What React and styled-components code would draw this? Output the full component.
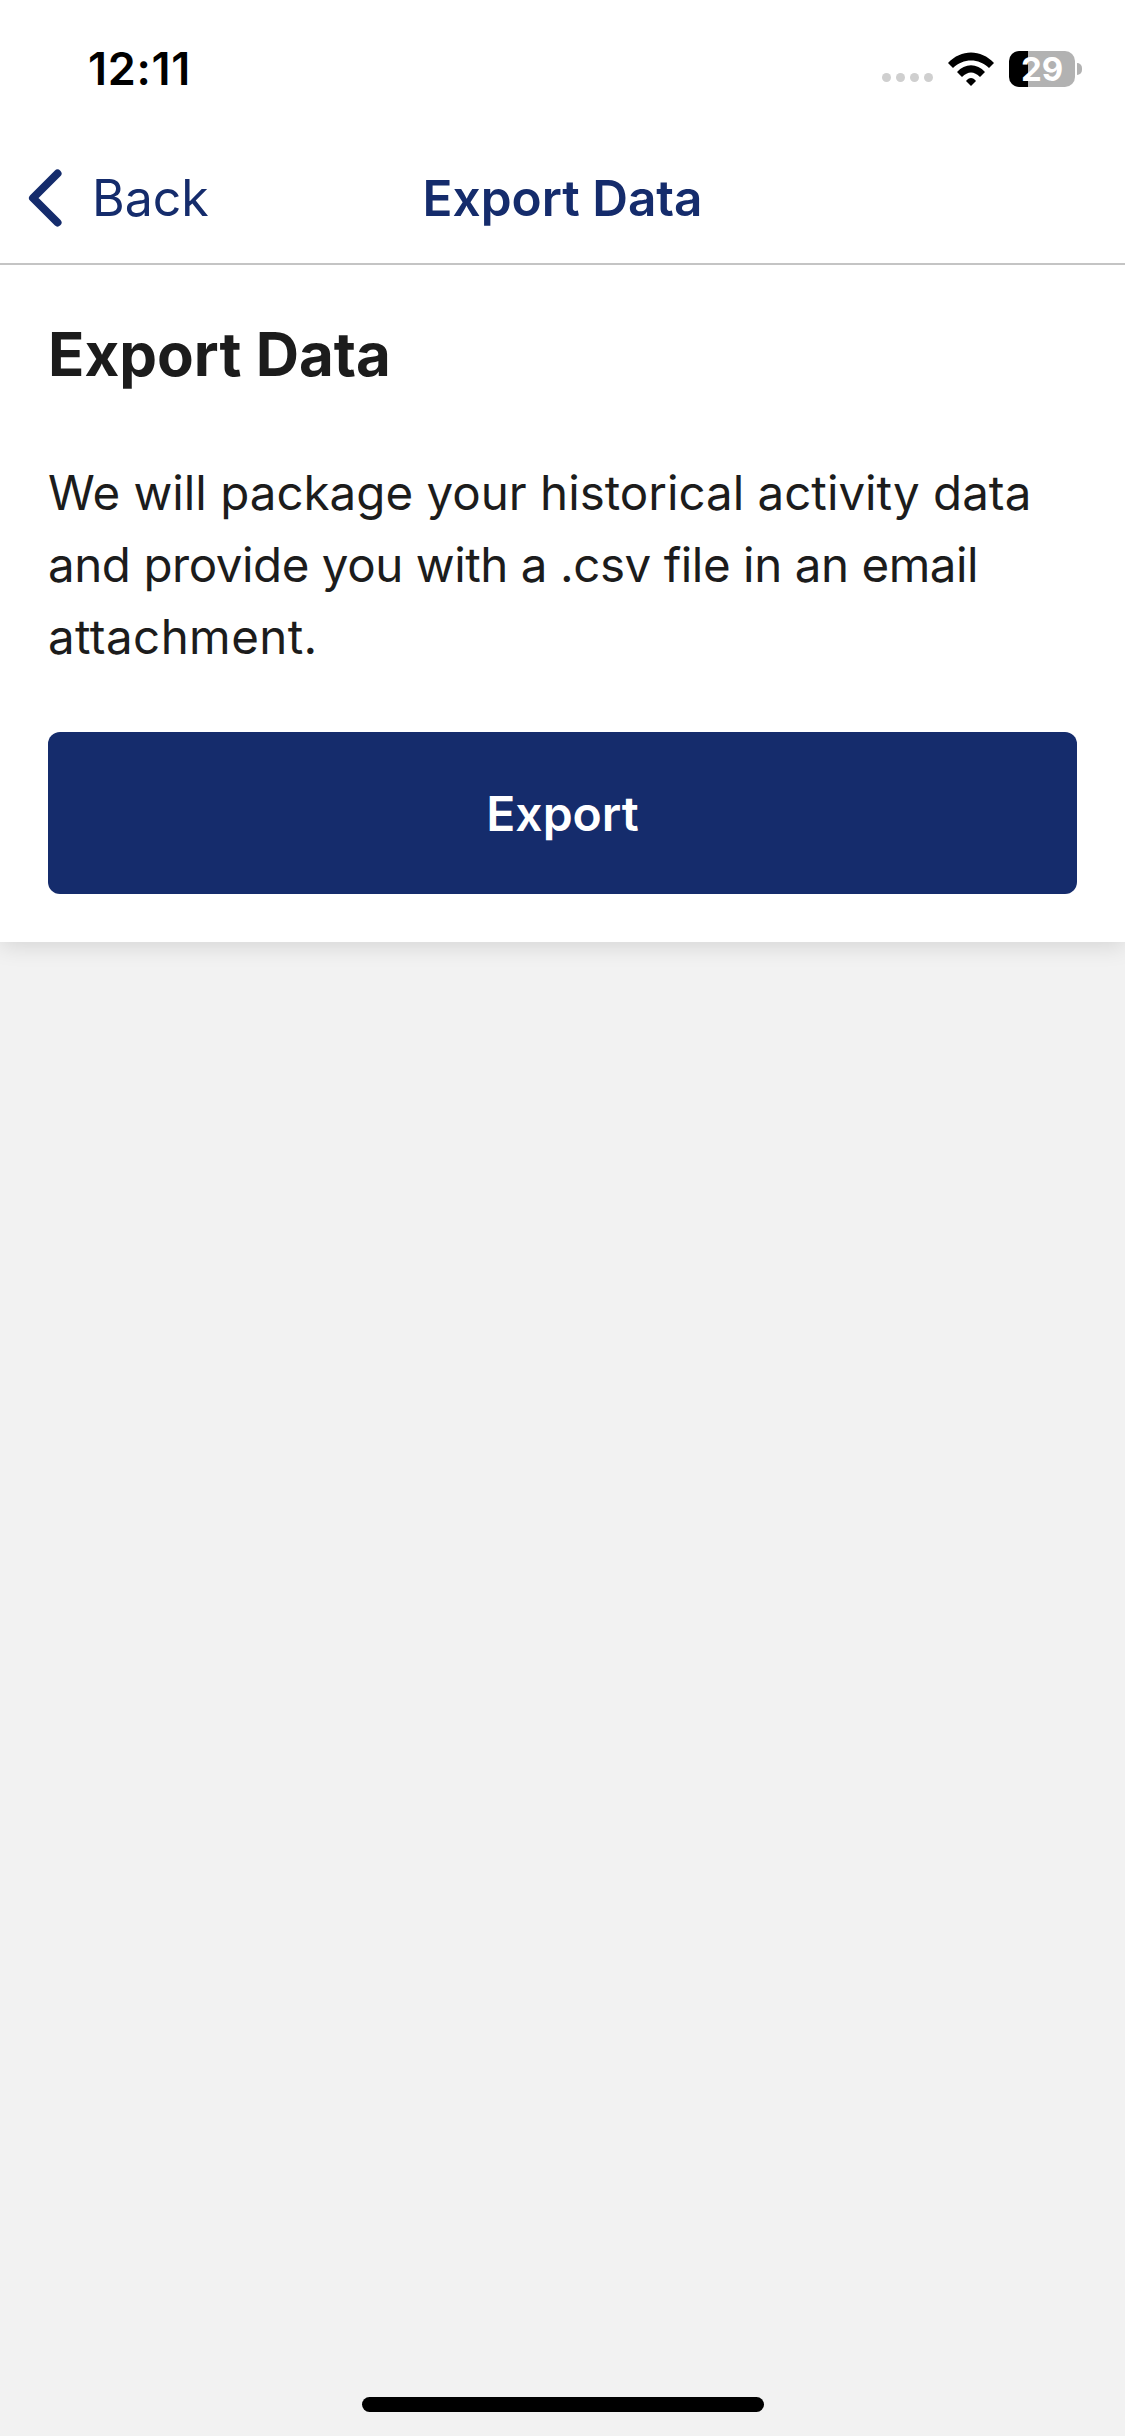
import React from 'react';
import styled, { createGlobalStyle } from 'styled-components';

const GlobalStyle = createGlobalStyle`
  html, body {
    margin: 0;
    padding: 0;
    background: #f2f2f2;
  }
  * {
    box-sizing: border-box;
  }
`;

const Page = styled.div`
  position: relative;
  width: 1125px;
  height: 2436px;
  background: #f2f2f2;
  font-family: Inter, "Liberation Sans", sans-serif;
  overflow: hidden;
`;

const StatusBar = styled.div`
  height: 132px;
  background: #fff;
  display: flex;
  justify-content: space-between;
  align-items: flex-start;
  padding: 42px 0 0 88px;
`;

const Time = styled.div`
  font-size: 45px;
  line-height: 54px;
  font-weight: 600;
  color: #000;
  letter-spacing: 0.7px;
`;

const StatusIcons = styled.div`
  display: flex;
  align-items: center;
  margin: 9px 50px 0 0;
`;

const SignalDots = styled.div`
  display: flex;
  gap: 5px;
  margin: 16px 15px 0 0;
`;

const Dot = styled.span`
  width: 9px;
  height: 9px;
  border-radius: 50%;
  background: #cfcfcf;
`;

const Battery = styled.div`
  position: relative;
  width: 66px;
  height: 36px;
  margin-left: 15px;
  border-radius: 10px;
  background: linear-gradient(to right, #000 0 29%, #b2b2b2 29% 100%);
  color: #fff;
  font-size: 33px;
  line-height: 36px;
  font-weight: 700;
  text-align: center;

  &::after {
    content: '';
    position: absolute;
    top: 12px;
    right: -7px;
    width: 5px;
    height: 12px;
    border-radius: 0 6px 6px 0;
    background: #b2b2b2;
  }
`;

const NavBar = styled.header`
  position: relative;
  height: 133px;
  background: #fff;
  border-bottom: 2px solid #c4c4c4;
  display: flex;
  align-items: center;
  justify-content: center;
`;

const BackLink = styled.div`
  position: absolute;
  left: 28px;
  top: 36px;
  display: flex;
  align-items: center;
  gap: 30px;
  color: #152c6c;
  font-size: 50px;
  line-height: 60px;
`;

const NavTitle = styled.div`
  color: #152c6c;
  font-size: 49.5px;
  line-height: 60px;
  font-weight: 600;
`;

const Card = styled.section`
  background: #fff;
  padding: 53px 48px 48px;
  box-shadow: 0 4px 22px rgba(0, 0, 0, 0.12);
`;

const Title = styled.h1`
  margin: 0 0 67px;
  color: #1c1c1c;
  font-size: 60px;
  line-height: 72px;
  font-weight: 700;
`;

const Body = styled.p`
  margin: 0 0 59px;
  color: #1c1c1c;
  font-size: 47.5px;
  line-height: 72px;
  font-weight: 400;
`;

const BodyLine = styled.span`
  display: block;
  letter-spacing: ${(props) => props.$tracking || 0}px;
`;

const ExportButton = styled.button`
  display: block;
  width: 100%;
  height: 162px;
  border: none;
  border-radius: 12px;
  background: #152c6c;
  color: #fff;
  font-family: inherit;
  font-size: 48px;
  font-weight: 600;
`;

const HomeBar = styled.div`
  position: absolute;
  left: 362px;
  bottom: 24px;
  width: 402px;
  height: 15px;
  border-radius: 8px;
  background: #000;
`;

const App = () => (
  <Page>
    <GlobalStyle />
    <StatusBar>
      <Time>12:11</Time>
      <StatusIcons>
        <SignalDots>
          <Dot />
          <Dot />
          <Dot />
          <Dot />
        </SignalDots>
        <svg width="46" height="34" viewBox="0 0 46 34">
          <path d="M0 11 C13 -3 33 -3 46 11 L41 16 C31 6 15 6 5 16 Z" fill="#000" />
          <path d="M9 20 C17 11 29 11 37 20 L32 25 C26 19 20 19 14 25 Z" fill="#000" />
          <path d="M18 29 C21 25 25 25 28 29 L23 34 Z" fill="#000" />
        </svg>
        <Battery>29</Battery>
      </StatusIcons>
    </StatusBar>
    <NavBar>
      <BackLink>
        <svg width="34" height="58" viewBox="0 0 34 58">
          <path d="M29.5 4.5 L5 29 L29.5 53.5" fill="none" stroke="#152c6c" strokeWidth="8" strokeLinecap="round" strokeLinejoin="round" />
        </svg>
        <span>Back</span>
      </BackLink>
      <NavTitle>Export Data</NavTitle>
    </NavBar>
    <Card>
      <Title>Export Data</Title>
      <Body>
        <BodyLine>We will package your historical activity data</BodyLine>
        <BodyLine $tracking={-0.45}>and provide you with a .csv file in an email</BodyLine>
        <BodyLine $tracking={0.4}>attachment.</BodyLine>
      </Body>
      <ExportButton>Export</ExportButton>
    </Card>
    <HomeBar />
  </Page>
);

export default App;
